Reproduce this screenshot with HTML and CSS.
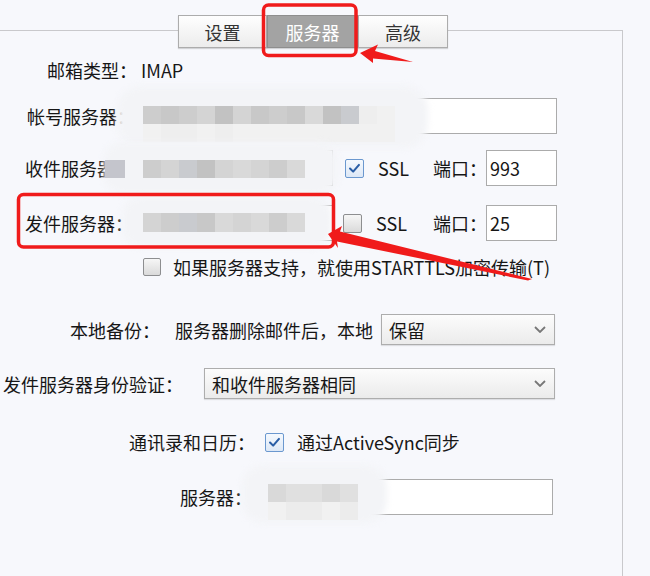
FILE: index.html
```html
<!DOCTYPE html>
<html lang="zh-CN">
<head>
<meta charset="utf-8">
<title>服务器设置</title>
<link rel="stylesheet" href="styles.css">
</head>
<body>
<div class="page">
  <div class="panel">
    <div class="tabs">
      <div class="tab tab-general">设置</div>
      <div class="tab tab-server active">服务器</div>
      <div class="tab tab-adv">高级</div>
    </div>

    <div class="row row-type">
      <span class="lbl lbl-type">邮箱类型：</span><span>IMAP</span>
    </div>

    <div class="row row-account">
      <span class="lbl lbl-host">帐号服务器：</span>
      <div class="input in-account"></div>
    </div>

    <div class="row row-in">
      <span class="lbl lbl-host2">收件服务器：</span>
      <div class="input in-host"></div>
      <span class="check checked ck-in"><svg viewBox="0 0 19 19" class="tick"><path d="M4.5 9.5 L8 13 L14.5 5.5"/></svg></span>
      <span class="ssl">SSL</span>
      <span class="lbl lbl-port">端口：</span>
      <div class="input in-port">993</div>
    </div>

    <div class="row row-out">
      <span class="lbl lbl-host2">发件服务器：</span>
      <div class="input in-host"></div>
      <span class="check ck-out"></span>
      <span class="ssl">SSL</span>
      <span class="lbl lbl-port">端口：</span>
      <div class="input in-port">25</div>
    </div>

    <div class="row row-tls">
      <span class="check ck-small"></span>
      <span class="opt-text">如果服务器支持，就使用STARTTLS加密传输(T)</span>
    </div>

    <div class="row row-backup">
      <span class="lbl lbl-backup">本地备份：</span>
      <span class="lbl lbl-del">服务器删除邮件后，本地</span>
      <div class="select sel-backup"><span>保留</span><svg class="chev" viewBox="0 0 12 7"><path d="M1 1 L6 6 L11 1"/></svg></div>
    </div>

    <div class="row row-auth">
      <span class="lbl lbl-auth">发件服务器身份验证：</span>
      <div class="select sel-auth"><span>和收件服务器相同</span><svg class="chev" viewBox="0 0 12 7"><path d="M1 1 L6 6 L11 1"/></svg></div>
    </div>

    <div class="row row-sync">
      <span class="lbl lbl-sync">通讯录和日历：</span>
      <span class="check checked ck-sync"><svg viewBox="0 0 19 19" class="tick"><path d="M4.5 9.5 L8 13 L14.5 5.5"/></svg></span>
      <span class="opt-text sync-text">通过ActiveSync同步</span>
    </div>

    <div class="row row-dav">
      <span class="lbl lbl-dav">服务器：</span>
      <div class="input in-dav"></div>
    </div>
  </div>

  <!-- privacy mosaics lying over the fields -->
  <div class="halo halo-a"></div>
  <div class="cells cells-a1"><i class="c3"></i><i class="c2"></i><i class="c3"></i><i class="c4"></i><i class="c1"></i><i class="c4"></i><i class="c2"></i><i class="c3"></i><i class="c2"></i><i class="c5"></i><i class="c1"></i><i class="c6"></i><i class="c7"></i><i class="c8"></i></div>
  <div class="cells cells-a2"><i class="c8"></i><i class="c7"></i><i class="c7"></i><i class="c8"></i><i class="c7"></i><i class="c8"></i><i class="c8"></i><i class="c8"></i><i class="c8"></i><i class="c8"></i><i class="c8"></i><i class="c8"></i><i class="c8"></i><i class="c8"></i></div>

  <div class="halo halo-b"></div>
  <div class="cells cells-b0"><i class="c9"></i></div>
  <div class="cells cells-b1"><i class="c3"></i><i class="c4"></i><i class="c6"></i><i class="c1"></i><i class="c4"></i><i class="c5"></i><i class="c4"></i><i class="c3"></i><i class="c5"></i></div>

  <div class="halo halo-c"></div>
  <div class="cells cells-c1"><i class="c4"></i><i class="c3"></i><i class="c6"></i><i class="c2"></i><i class="c5"></i><i class="c4"></i><i class="c5"></i><i class="c3"></i><i class="c5"></i></div>

  <div class="halo halo-d"></div>
  <div class="cells cells-d1"><i class="c5"></i><i class="c10"></i><i class="c10"></i><i class="c5"></i><i class="c10"></i></div>
  <div class="cells cells-d2"><i class="c8"></i><i class="c11"></i><i class="c11"></i><i class="c8"></i><i class="c11"></i></div>

  <!-- red annotations -->
  <svg class="annot" viewBox="0 0 650 576">
    <rect x="263.5" y="5" width="92.5" height="50.5" rx="5" class="mark"/>
    <rect x="18.5" y="194.5" width="315" height="52.5" rx="5" class="mark"/>
    <polygon class="arrow" points="360,53 378,44.5 375,51 413,62 373,58.5 373,63"/>
    <polygon class="arrow" points="328,234 342,226 340,231.5 532,279 528,280.5 337,241.5 338,248"/>
  </svg>
</div>
</body>
</html>
```

FILE: styles.css
```css
* { box-sizing: border-box; }

body {
  margin: 0;
  background: #f7f8fc;
  font-family: "Noto Sans CJK SC", "Noto Sans", "Liberation Sans", sans-serif;
  font-size: 18px;
  color: #161616;
}

.page {
  position: relative;
  width: 650px;
  height: 576px;
  overflow: hidden;
  padding-top: 30px;
}

.panel {
  width: 623px;
  height: 546px;
  border-top: 1px solid #c9c9cc;
  border-right: 1px solid #c9c9cc;
}

/* tabs */
.tabs {
  display: flex;
  margin: -16px 0 0 178px;
}
.tab {
  height: 33px;
  border: 1px solid #acacac;
  background: linear-gradient(#fefefe, #ececec);
  box-shadow: 0 1px 1px rgba(0, 0, 0, 0.15);
  display: flex;
  align-items: center;
  justify-content: center;
  color: #333;
  line-height: 1;
}
.tab-general { width: 89px; }
.tab-server { width: 91px; }
.tab-adv { width: 90px; }
.tab.active {
  background: #a3a3a3;
  border-color: #8e8e8e;
  color: #fff;
}

/* rows */
.row {
  display: flex;
  align-items: center;
  line-height: 1;
  white-space: nowrap;
}
.row-type { margin-top: 10px; height: 24px; padding-left: 47px; }
.row-account { margin-top: 16px; height: 36px; padding-left: 27px; }
.row-in { margin-top: 16px; height: 36px; padding-left: 25px; }
.row-out { margin-top: 19px; height: 36px; padding-left: 25px; }
.row-tls { margin-top: 16px; height: 20px; padding-left: 143px; }
.row-backup { margin-top: 37px; height: 31px; padding-left: 70px; }
.row-auth { margin-top: 23px; height: 31px; padding-left: 3px; }
.row-sync { margin-top: 33px; height: 20px; padding-left: 129px; }
.row-dav { margin-top: 27px; height: 36px; padding-left: 180px; }

.lbl { flex: none; }
.lbl-type { width: 94px; }
.lbl-host { width: 110px; }
.lbl-host2 { width: 112px; }
.lbl-port { width: 53px; }
.lbl-backup { width: 105px; }
.lbl-del { width: 206px; }
.lbl-auth { width: 201px; }
.lbl-sync { width: 136px; }
.lbl-dav { width: 82px; }

/* inputs */
.input {
  flex: none;
  height: 36px;
  background: #fff;
  border: 1px solid #ababab;
  display: flex;
  align-items: center;
  padding-left: 3px;
}
.in-account { width: 420px; }
.in-host { width: 196px; }
.in-port { width: 71px; }
.in-dav { width: 291px; }

.ssl { width: 55px; margin-left: 14px; }

/* checkboxes */
.check {
  flex: none;
  width: 19px;
  height: 19px;
  border: 1px solid #8d8e90;
  border-radius: 2px;
  background: linear-gradient(#f6f6f6, #dadada);
  display: flex;
}
.check.checked {
  border-color: #6b98cf;
  background: linear-gradient(#f5f9fe, #dde8f6);
}
.tick { width: 17px; height: 17px; }
.tick path {
  fill: none;
  stroke: #2a5ea6;
  stroke-width: 2.3;
  stroke-linecap: round;
  stroke-linejoin: round;
}
.ck-in { margin-left: 12px; }
.ck-out { margin-left: 10px; }
.ck-out + .ssl { margin-left: 14px; width: 57px; }
.ck-small { width: 18px; height: 18px; }

.opt-text { margin-left: 12px; }
.sync-text { margin-left: 13px; }

/* selects */
.select {
  flex: none;
  height: 31px;
  border: 1px solid #adadad;
  background: linear-gradient(#fcfcfc, #ebebeb);
  box-shadow: 0 1px 1px rgba(0, 0, 0, 0.1);
  display: flex;
  align-items: center;
  justify-content: space-between;
  padding: 0 8px 0 7px;
}
.sel-backup { width: 174px; }
.sel-auth { width: 351px; }
.chev { width: 12px; height: 7px; }
.chev path {
  fill: none;
  stroke: #777;
  stroke-width: 1.8;
}

/* mosaics (overlays) */
.halo {
  position: absolute;
  background: #f3f4f7;
  border-radius: 24px;
  filter: blur(3px);
}
.halo-a { left: 117px; top: 86px; width: 311px; height: 62px; }
.halo-b { left: 104px; top: 142px; width: 234px; height: 52px; border-radius: 18px; }
.halo-c { left: 122px; top: 196px; width: 210px; height: 52px; border-radius: 20px; }
.halo-d { left: 242px; top: 465px; width: 145px; height: 58px; border-radius: 22px; }

.cells {
  position: absolute;
  display: flex;
}
.cells i { display: block; width: 18px; height: 18px; }
.cells-a1 { left: 143px; top: 106px; }
.cells-a2 { left: 143px; top: 124px; }
.cells-b0 { left: 105px; top: 160px; }
.cells-b0 i { width: 20px; }
.cells-b1 { left: 143px; top: 160px; }
.cells-c1 { left: 143px; top: 213px; }
.cells-c1 i { height: 19px; }
.cells-d1 { left: 268px; top: 484px; }
.cells-d2 { left: 268px; top: 502px; }

.c1 { background: #c2c2c2; }
.c2 { background: #c8c8c8; }
.c3 { background: #cdcdcd; }
.c4 { background: #d4d4d4; }
.c5 { background: #d9d9d9; }
.c6 { background: #c9cbcf; }
.c7 { background: #eeeeee; }
.c8 { background: #f1f1f1; }
.c9 { background: #c4c5cc; }
.c10 { background: #e0e0e0; }
.c11 { background: #ececec; }

/* annotations */
.annot {
  position: absolute;
  left: 0;
  top: 0;
  width: 650px;
  height: 576px;
  pointer-events: none;
}
.mark {
  fill: none;
  stroke: #f01b1b;
  stroke-width: 3.5;
}
.arrow { fill: #f01b1b; }
```
